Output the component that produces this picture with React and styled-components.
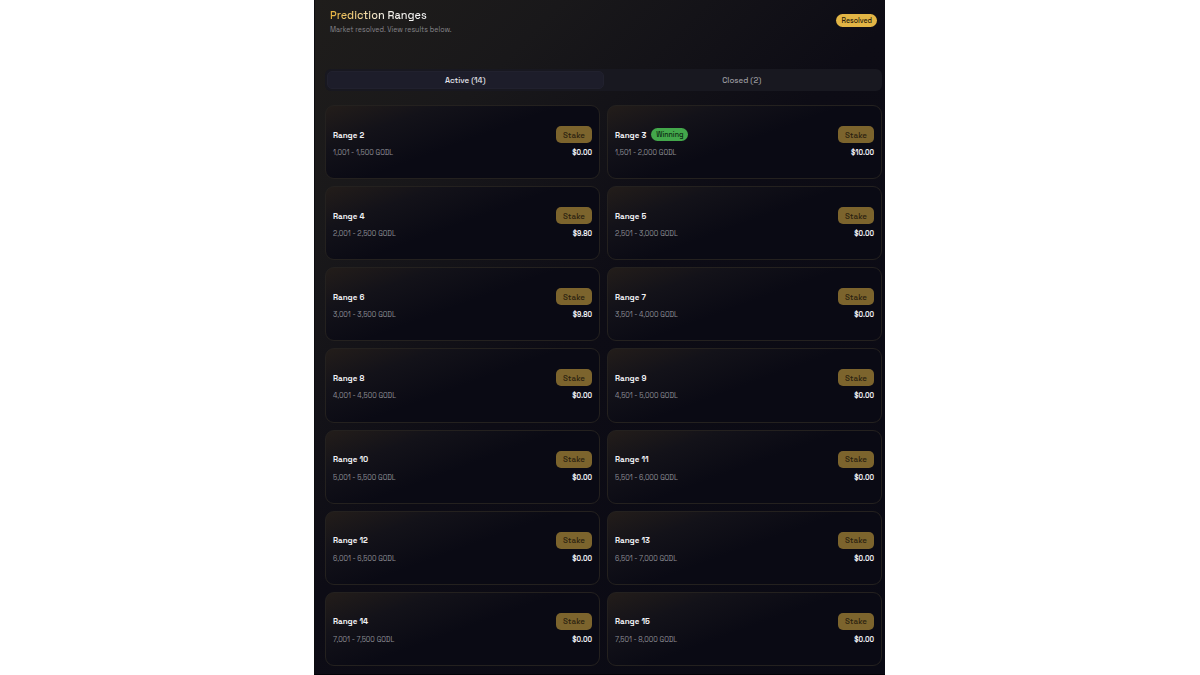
import React, { useState } from "react";
import styled, { createGlobalStyle } from "styled-components";

const GlobalStyle = createGlobalStyle`
    *, *::before, *::after {
        box-sizing: border-box;
    }
    body {
        margin: 0;
        background-color: #ffffff;
        font-family: "Space Grotesk", Inter, "Liberation Sans", sans-serif;
    }
    h1, h2, p {
        margin: 0;
    }
    button {
        font-family: inherit;
        border: 0;
        padding: 0;
    }
`

const ranges = [
    { id: 2, from: "1,001", to: "1,500", staked: "$0.00" },
    { id: 3, from: "1,501", to: "2,000", staked: "$10.00", winning: true },
    { id: 4, from: "2,001", to: "2,500", staked: "$9.80" },
    { id: 5, from: "2,501", to: "3,000", staked: "$0.00" },
    { id: 6, from: "3,001", to: "3,500", staked: "$9.80" },
    { id: 7, from: "3,501", to: "4,000", staked: "$0.00" },
    { id: 8, from: "4,001", to: "4,500", staked: "$0.00" },
    { id: 9, from: "4,501", to: "5,000", staked: "$0.00" },
    { id: 10, from: "5,001", to: "5,500", staked: "$0.00" },
    { id: 11, from: "5,501", to: "6,000", staked: "$0.00" },
    { id: 12, from: "6,001", to: "6,500", staked: "$0.00" },
    { id: 13, from: "6,501", to: "7,000", staked: "$0.00" },
    { id: 14, from: "7,001", to: "7,500", staked: "$0.00" },
    { id: 15, from: "7,501", to: "8,000", staked: "$0.00" },
];

const tabs = [
    { key: "active", label: "Active (14)" },
    { key: "closed", label: "Closed (2)" },
];

const Page = styled.div`
    display: flex;
    justify-content: center;
    min-height: 100vh;
    padding-right: 1px;
`

const Panel = styled.main`
    display: flex;
    flex-direction: column;
    width: 100%;
    max-width: 571px;
    padding: 8px 3px 8px 10px;
    border-left: 1px solid #0c0c10;
    border-bottom: 1px solid #020207;
    background: linear-gradient(135deg, #1f1d1b 0%, #19181a 20%, #0d0c15 48%, #0a0a14 100%);
`

const Header = styled.header`
    display: flex;
    justify-content: space-between;
    align-items: flex-start;
    padding: 0 5px;
    margin-bottom: 33px;
`

const Title = styled.h1`
    width: fit-content;
    font-size: 11px;
    font-weight: 500;
    line-height: 15px;
    color: transparent;
    background: linear-gradient(90deg, #e5b03c 0%, #efcf85 28%, #f4f1ea 56%, #f4f4f6 100%);
    background-clip: text;
`

const Subtitle = styled.p`
    font-size: 7px;
    line-height: 13px;
    color: #858489;
`

const Badge = styled.span`
    display: inline-flex;
    align-items: center;
    height: 13px;
    padding: 0 5px;
    border-radius: 7px;
    font-size: 7px;
    font-weight: 500;
    color: ${({ $tone }) => ($tone === "green" ? "#0c2a12" : "#2a200a")};
    background-color: ${({ $tone }) => ($tone === "green" ? "#43a74b" : "#e2b545")};
`

const HeaderAside = styled.div`
    display: flex;
    padding-top: 6px;
`

const TabList = styled.div`
    display: flex;
    height: 22px;
    padding: 2px;
    margin-bottom: 14px;
    border-radius: 6px;
    background-color: #181820;
`

const Tab = styled.button`
    flex: 1;
    border: 1px solid ${({ $selected }) => ($selected ? "#21212e" : "transparent")};
    border-radius: 5px;
    font-size: 8px;
    font-weight: 500;
    color: ${({ $selected }) => ($selected ? "#e6e6ec" : "#98989f")};
    background-color: ${({ $selected }) => ($selected ? "#1d1d2a" : "transparent")};
    cursor: pointer;
`

const Grid = styled.section`
    display: grid;
    flex: 1;
    grid-template-columns: 1fr 1fr;
    grid-auto-rows: 1fr;
    gap: 7px;
`

const Card = styled.article`
    display: flex;
    flex-direction: column;
    justify-content: center;
    gap: 5px;
    min-height: 74px;
    padding: 0 7px;
    border: 1px solid #24211f;
    border-radius: 9px;
    background: linear-gradient(160deg, #231d1a 0%, #131219 24%, #0a0a14 50%, #0a0a14 100%);
`

const CardRow = styled.div`
    display: flex;
    justify-content: space-between;
    align-items: center;
`

const CardName = styled.div`
    display: flex;
    align-items: center;
    gap: 5px;
`

const RangeTitle = styled.h2`
    font-size: 8px;
    font-weight: 600;
    line-height: 12px;
    color: #f0f0f4;
`

const StakeButton = styled.button`
    height: 17px;
    padding: 0 7px;
    border-radius: 5px;
    font-size: 8px;
    font-weight: 500;
    color: #2b220f;
    background-color: #7c642d;
`

const RangeText = styled.p`
    font-size: 7px;
    line-height: 10px;
    color: #8d8d95;
`

const Amount = styled.p`
    font-size: 7px;
    font-weight: 600;
    line-height: 10px;
    color: #f0f0f4;
`

const RangeCard = ({ range }) => (
    <Card>
        <CardRow>
            <CardName>
                <RangeTitle>Range {range.id}</RangeTitle>
                {range.winning && <Badge $tone="green">Winning</Badge>}
            </CardName>
            <StakeButton type="button" disabled>Stake</StakeButton>
        </CardRow>
        <CardRow>
            <RangeText>{range.from} - {range.to} GODL</RangeText>
            <Amount>{range.staked}</Amount>
        </CardRow>
    </Card>
)

const App = () => {
    const [selectedTab, setSelectedTab] = useState("active");

    return <>
        <GlobalStyle />
        <Page>
            <Panel>
                <Header>
                    <div>
                        <Title>Prediction Ranges</Title>
                        <Subtitle>Market resolved. View results below.</Subtitle>
                    </div>
                    <HeaderAside>
                        <Badge $tone="gold">Resolved</Badge>
                    </HeaderAside>
                </Header>
                <TabList role="tablist">
                    {tabs.map((tab) => (
                        <Tab
                            key={tab.key}
                            type="button"
                            role="tab"
                            aria-selected={selectedTab === tab.key}
                            $selected={selectedTab === tab.key}
                            onClick={() => setSelectedTab(tab.key)}
                        >
                            {tab.label}
                        </Tab>
                    ))}
                </TabList>
                <Grid>
                    {ranges.map((range) => <RangeCard key={range.id} range={range} />)}
                </Grid>
            </Panel>
        </Page>
    </>
}

export default App;
